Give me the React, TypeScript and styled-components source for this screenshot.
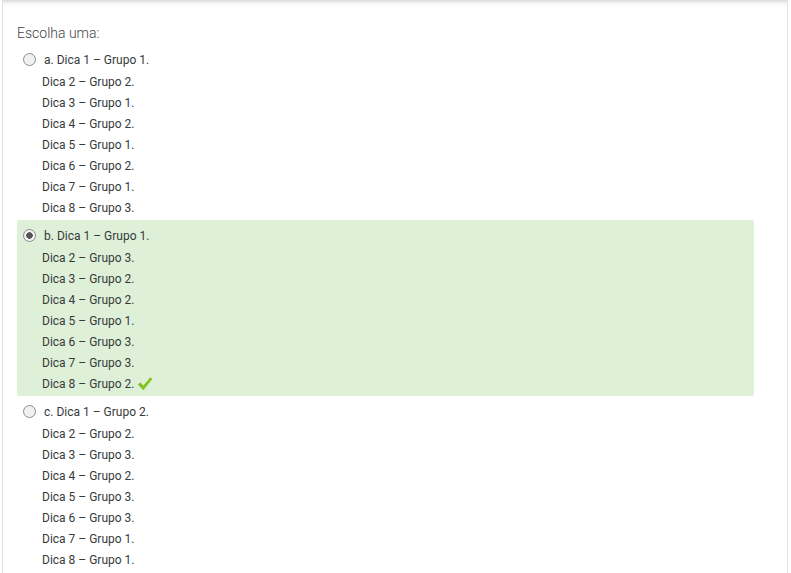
import styled, { createGlobalStyle } from "styled-components";

type Option = { letter: string; lines: string[]; checked?: boolean; correct?: boolean };

const options: Option[] = [
	{
		letter: "a",
		lines: [
			"Dica 1 – Grupo 1.",
			"Dica 2 – Grupo 2.",
			"Dica 3 – Grupo 1.",
			"Dica 4 – Grupo 2.",
			"Dica 5 – Grupo 1.",
			"Dica 6 – Grupo 2.",
			"Dica 7 – Grupo 1.",
			"Dica 8 – Grupo 3.",
		],
	},
	{
		letter: "b",
		checked: true,
		correct: true,
		lines: [
			"Dica 1 – Grupo 1.",
			"Dica 2 – Grupo 3.",
			"Dica 3 – Grupo 2.",
			"Dica 4 – Grupo 2.",
			"Dica 5 – Grupo 1.",
			"Dica 6 – Grupo 3.",
			"Dica 7 – Grupo 3.",
			"Dica 8 – Grupo 2.",
		],
	},
	{
		letter: "c",
		lines: [
			"Dica 1 – Grupo 2.",
			"Dica 2 – Grupo 2.",
			"Dica 3 – Grupo 3.",
			"Dica 4 – Grupo 2.",
			"Dica 5 – Grupo 3.",
			"Dica 6 – Grupo 3.",
			"Dica 7 – Grupo 1.",
			"Dica 8 – Grupo 1.",
		],
	},
];

const Check = () => (
	<CheckIcon viewBox="0 0 16 16">
		<path d="M0.8 8.4 L3.4 6.2 L6.3 9.6 L13.4 1.2 L15.4 3 L6.3 14.2 Z" />
	</CheckIcon>
);

const App = () => {
	return (
		<>
			<GlobalStyle />
			<Page>
				<Prompt>Escolha uma:</Prompt>
				<Answers>
					{options.map((opt) => (
						<AnswerBox key={opt.letter} $correct={opt.correct}>
							<FirstRow>
								<Radio $checked={opt.checked} />
								<span>
									{opt.letter}. {opt.lines[0]}
								</span>
							</FirstRow>
							{opt.lines.slice(1).map((line, i) => (
								<Line key={i}>
									{line}
									{opt.correct && i === opt.lines.length - 2 && <Check />}
								</Line>
							))}
						</AnswerBox>
					))}
				</Answers>
			</Page>
		</>
	);
};

export default App;

const GlobalStyle = createGlobalStyle`
	html, body {
		margin: 0;
		padding: 0;
		background: #fff;
	}
	body {
		font-family: Roboto, "Liberation Sans", sans-serif;
		color: #373a3c;
		overflow: hidden;
	}
`;

const Page = styled.div`
	width: 786px;
	height: 573px;
	margin-left: 2px;
	border-left: 1px solid #e3e3e3;
	border-right: 1px solid #e3e3e3;
	background: linear-gradient(#d9d9d9 0px, #f4f4f4 3px, #fff 7px);
	box-sizing: border-box;
	padding: 24px 0 0 14px;
`;

const Prompt = styled.div`
	font-size: 14px;
	font-weight: 300;
	color: #444;
	line-height: 18px;
`;

const Answers = styled.div`
	margin-top: 2px;
	width: 737px;
`;

const AnswerBox = styled.div<{ $correct?: boolean }>`
	padding: 4px 0 2px 0;
	background: ${(p) => (p.$correct ? "#dff0d8" : "transparent")};
	border-radius: 2px;
	font-size: 12px;
`;

const FirstRow = styled.div`
	display: flex;
	align-items: center;
	height: 23px;
	padding-left: 6px;
	gap: 8px;
`;

const Radio = styled.span<{ $checked?: boolean }>`
	width: 13px;
	height: 13px;
	border-radius: 50%;
	box-sizing: border-box;
	border: 1px solid #8a8a8a;
	background: ${(p) =>
		p.$checked
			? "radial-gradient(circle, #555 0 3px, #f1f1f1 3.5px)"
			: "#f1f1f1"};
	flex-shrink: 0;
`;

const Line = styled.div`
	display: flex;
	align-items: center;
	height: 21px;
	padding-left: 25px;
`;

const CheckIcon = styled.svg`
	width: 16px;
	height: 16px;
	margin-left: 3px;
	fill: #84c225;
`;
